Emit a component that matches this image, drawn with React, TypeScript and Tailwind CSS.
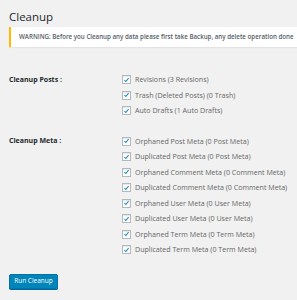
import React from "react";

const posts = [
  "Revisions (3 Revisions)",
  "Trash (Deleted Posts) (0 Trash)",
  "Auto Drafts (1 Auto Drafts)",
];
const meta = [
  "Orphaned Post Meta (0 Post Meta)",
  "Duplicated Post Meta (0 Post Meta)",
  "Orphaned Comment Meta (0 Comment Meta)",
  "Duplicated Comment Meta (0 Comment Meta)",
  "Orphaned User Meta (0 User Meta)",
  "Duplicated User Meta (0 User Meta)",
  "Orphaned Term Meta (0 Term Meta)",
  "Duplicated Term Meta (0 Term Meta)",
];

function Check() {
  return (
    <span className="flex h-[9px] w-[9px] shrink-0 items-center justify-center border border-[#b4b9be] bg-white shadow-[inset_0_1px_1px_rgba(0,0,0,0.1)]">
      <svg width="8" height="8" viewBox="0 0 20 20">
        <path d="M4 10.5 L8 14.5 L16 4.5" fill="none" stroke="#1e8cbe" strokeWidth="3" />
      </svg>
    </span>
  );
}

function Section({ label, items }: { label: string; items: string[] }) {
  return (
    <div className="flex">
      <div className="w-[113px] shrink-0 h-[15.5px] flex items-center text-[7px] font-bold text-[#23282d]">
        {label}
      </div>
      <div className="flex flex-col">
        {items.map((t) => (
          <div key={t} className="flex h-[15.5px] items-center gap-[4px] whitespace-nowrap text-[7.1px] text-[#666]">
            <Check />
            <span>{t}</span>
          </div>
        ))}
      </div>
    </div>
  );
}

export default function App() {
  return (
    <div className="h-[300px] w-[297px] overflow-hidden bg-[#f1f1f1] pl-[9px] pt-[8px] font-['Open_Sans',sans-serif]">
      <h1 className="h-[18px] text-[11.5px] leading-[18px] text-[#23282d]">Cleanup</h1>
      <div className="mt-[1px] flex h-[20px] items-center overflow-hidden whitespace-nowrap border-l-[2.5px] border-[#ffb900] bg-white pl-[8px] text-[6.2px] font-semibold text-[#555d66] shadow-[0_1px_1px_rgba(0,0,0,0.05)]">
        WARNING: Before you Cleanup any data please first take Backup, any delete operation done
      </div>
      <div className="mt-[25px]">
        <Section label="Cleanup Posts :" items={posts} />
      </div>
      <div className="mt-[15px]">
        <Section label="Cleanup Meta :" items={meta} />
      </div>
      <button className="mt-[16px] flex h-[15px] w-[49px] items-center justify-center rounded-[2px] border border-[#0073aa] bg-[#0085ba] text-[6.5px] text-white shadow-[0_1px_0_#006799]">
        Run Cleanup
      </button>
    </div>
  );
}
